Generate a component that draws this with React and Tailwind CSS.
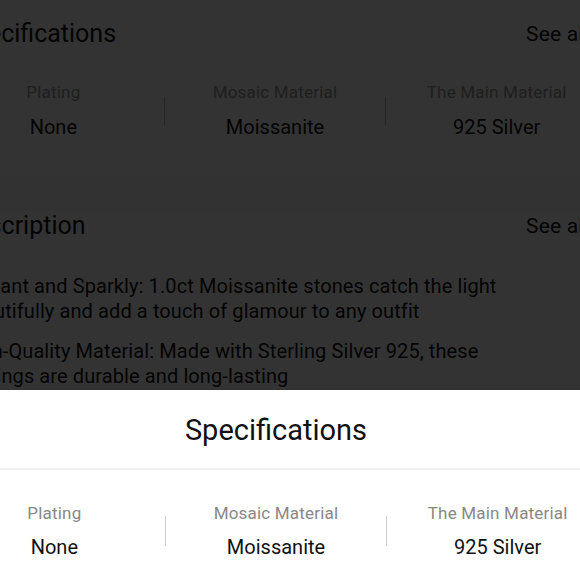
import React from "react";

function SpecRow({ labelColor, valueColor, dividerColor, dividerH, gap }) {
  const items = [
    ["Plating", "None"],
    ["Mosaic Material", "Moissanite"],
    ["The Main Material", "925 Silver"],
  ];
  return (
    <div className="flex items-center">
      {items.map(([l, v], i) => (
        <React.Fragment key={l}>
          {i > 0 && <div className={`w-px ${dividerH} ${dividerColor}`} />}
          <div className="flex-1 flex flex-col items-center">
            <div className={`text-[17px] leading-[22px] tracking-[0.2px] ${labelColor} whitespace-nowrap`}>{l}</div>
            <div className={`${gap} text-[20px] leading-[26px] ${valueColor} whitespace-nowrap`}>{v}</div>
          </div>
        </React.Fragment>
      ))}
    </div>
  );
}

function SectionHead({ title }) {
  return (
    <div className="flex items-center justify-between pl-4 pr-[4px]">
      <div className="text-[25px] leading-[30px] text-[#111]">{title}</div>
      <div className="flex items-center gap-1 text-[21px] leading-[30px] tracking-[0.2px] text-[#111]">
        <span>See all</span>
        <svg width="10" height="16" viewBox="0 0 10 16" fill="none" stroke="#111" strokeWidth="2"><path d="M2 2l6 6-6 6" /></svg>
      </div>
    </div>
  );
}

export default function App() {
  return (
    <div
      className="w-[580px] h-[580px] overflow-hidden bg-white flex flex-col"
      style={{ fontFamily: "Roboto, 'Noto Sans', sans-serif" }}
    >
      <div className="relative h-[390px] shrink-0 overflow-hidden bg-white">
        <div className="w-[664px] -ml-[57px] pt-[19px]">
          <SectionHead title="Specifications" />
          <div className="mt-[32px]">
            <SpecRow labelColor="text-[#9a9a9a]" valueColor="text-[#111]" dividerColor="bg-[#bbb]" dividerH="h-[28px]" gap="mt-[11px]" />
          </div>
          <div className="h-[35px]" />
          <div className="h-[36px] bg-[#f7f7f7]" />
          <SectionHead title="Description" />
          <div className="mt-[33px] pl-[18px] text-[20px] leading-[25px] tracking-[0.1px] text-[#111] whitespace-nowrap">
            <p>Brilliant and Sparkly: 1.0ct Moissanite stones catch the light<br />beautifully and add a touch of glamour to any outfit</p>
            <p className="mt-[15px]">High-Quality Material: Made with Sterling Silver 925, these<br />earrings are durable and long-lasting</p>
          </div>
        </div>
        <div className="absolute inset-0 bg-black/80" />
      </div>
      <div className="flex-1 bg-white">
        <div className="w-[664px] -ml-[56px]">
          <div className="pt-[23px] text-center text-[29px] leading-[35px] text-[#111]">Specifications</div>
          <div className="mt-[20px] h-[2px] bg-[#f0f0f0]" />
          <div className="mt-[32px]">
            <SpecRow labelColor="text-[#888]" valueColor="text-[#111]" dividerColor="bg-[#ccc]" dividerH="h-[30px]" gap="mt-[10px]" />
          </div>
        </div>
      </div>
    </div>
  );
}
